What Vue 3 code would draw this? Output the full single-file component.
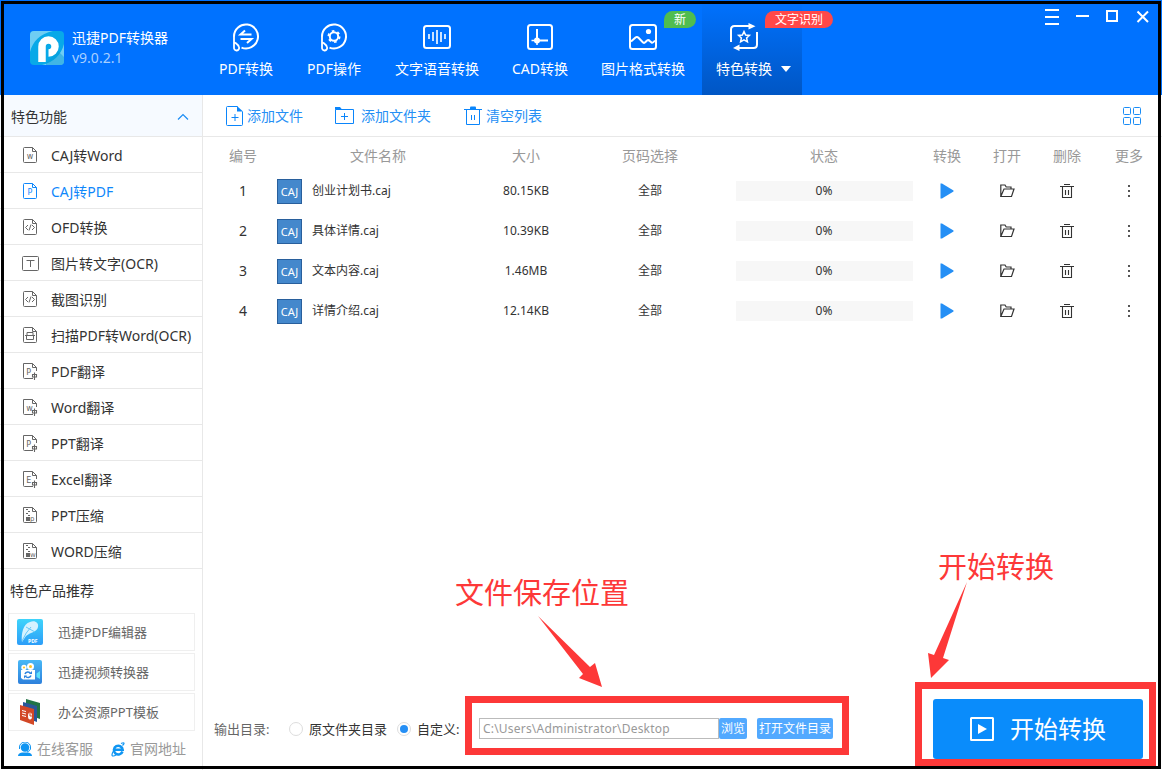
<script setup>
import { ref } from 'vue'

const tabs = [
  { id: 'pdf', label: 'PDF转换' },
  { id: 'ops', label: 'PDF操作' },
  { id: 'voice', label: '文字语音转换', wide: true },
  { id: 'cad', label: 'CAD转换' },
  { id: 'image', label: '图片格式转换', wide: true, badge: '新' },
  { id: 'special', label: '特色转换', badge: '文字识别' },
]

const features = [
  { label: 'CAJ转Word', icon: 'doc', mark: 'w' },
  { label: 'CAJ转PDF', icon: 'doc', mark: 'P' },
  { label: 'OFD转换', icon: 'code' },
  { label: '图片转文字(OCR)', icon: 'ocr' },
  { label: '截图识别', icon: 'code' },
  { label: '扫描PDF转Word(OCR)', icon: 'scan' },
  { label: 'PDF翻译', icon: 'trans', mark: 'P' },
  { label: 'Word翻译', icon: 'trans', mark: 'w' },
  { label: 'PPT翻译', icon: 'trans', mark: 'P' },
  { label: 'Excel翻译', icon: 'trans', mark: 'E' },
  { label: 'PPT压缩', icon: 'zip', mark: 'p' },
  { label: 'WORD压缩', icon: 'zip', mark: 'w' },
]

const products = [
  { id: 'editor', label: '迅捷PDF编辑器' },
  { id: 'video', label: '迅捷视频转换器' },
  { id: 'ppt', label: '办公资源PPT模板' },
]

const files = ref([
  { name: '创业计划书.caj', size: '80.15KB', progress: 0 },
  { name: '具体详情.caj', size: '10.39KB', progress: 0 },
  { name: '文本内容.caj', size: '1.46MB', progress: 0 },
  { name: '详情介绍.caj', size: '12.14KB', progress: 0 },
])

const activeTab = ref('special')
const activeFeature = ref('CAJ转PDF')
const target = ref('custom')
const path = 'C:\\Users\\Administrator\\Desktop'
</script>

<template>
  <div class="window">
    <header class="header">
      <div class="brand">
        <svg class="brand-logo" width="34" height="34" viewBox="0 0 34 34">
          <defs>
            <clipPath id="logo-clip"><rect width="34" height="34" rx="4" /></clipPath>
          </defs>
          <g clip-path="url(#logo-clip)">
            <rect width="34" height="34" fill="#08a9e8" />
            <path d="M0 0H23C10 3 3 10 0 21Z" fill="#6fcdf3" />
            <path d="M34 13V34H12C24 31 31 24 34 13Z" fill="#6fcdf3" />
            <path d="M16 32L28 20 34 26V34H16Z" fill="#0799d5" opacity=".45" />
            <path d="M12 31V15.500A6.500 6.500 0 1 1 18.500 22" fill="none" stroke="#fff" stroke-width="7.500" />
          </g>
        </svg>
        <div class="brand-text">
          <span>迅捷PDF转换器</span>
          <span class="version">v9.0.2.1</span>
        </div>
      </div>

      <nav class="tabs">
        <div
          v-for="tab in tabs"
          :key="tab.id"
          class="tab"
          :class="{ 'tab--wide': tab.wide, 'tab--active': tab.id === activeTab }"
          @click="activeTab = tab.id"
        >
          <svg class="tab-icon" width="30" height="30" viewBox="0 0 30 30" fill="none" stroke="#fff" stroke-width="2">
            <g v-if="tab.id === 'pdf' || tab.id === 'ops'">
              <path d="M3 14.500A12 12 0 1 1 10.500 25.600" />
              <path d="M3 14V25.500A2.600 2.600 0 1 0 8 25C7.500 22.500 5.500 22 4 20.500" stroke-width="1.800" />
              <g v-if="tab.id === 'pdf'">
                <path d="M20.500 12.500H9.500L14 8.500M9.500 17H20.500L16 21" />
              </g>
              <g v-else>
                <circle cx="15" cy="14.500" r="4.200" />
                <circle cx="15" cy="14.500" r="5.600" stroke-width="1.800" stroke-dasharray="2.600 3.264" />
              </g>
            </g>
            <g v-else-if="tab.id === 'voice'">
              <rect x="2" y="4" width="26" height="22" rx="2.500" />
              <path d="M7 12V17M11 10V19M15 8V22M19 10V20M23 12V17" stroke-width="1.600" />
            </g>
            <g v-else-if="tab.id === 'cad'">
              <rect x="3" y="3" width="24" height="24" rx="2.500" />
              <path d="M12 7V18M12 18.500H23" />
              <circle cx="12" cy="18.500" r="3" fill="#fff" stroke="none" />
              <path d="M6.500 18.500H12V23" stroke-width="1.500" />
            </g>
            <g v-else-if="tab.id === 'image'">
              <rect x="2" y="3" width="26" height="24" rx="2.500" />
              <circle cx="20.500" cy="9.500" r="2.600" fill="#fff" stroke="none" />
              <path d="M3 19.500L7.500 15.500Q9 14.300 10.500 15.700L15 20.500Q16.500 21.500 17.500 20L19 18.500Q20.500 17.500 22 19.200L24 20.800Q25 21 27 18.500" />
            </g>
            <g v-else>
              <path d="M2 20V7.500Q2 4 5.500 4H21M28 10V22.500Q28 26 24.500 26H9" />
              <path d="M19.500 1L26.500 4.200 19.500 7.500ZM10.500 22.500L4 26 10.500 29Z" fill="#fff" stroke="none" />
              <path d="M15 9.500L16.600 13 20.400 13.400 17.600 16 18.400 19.800 15 17.900 11.600 19.800 12.400 16 9.600 13.400 13.400 13Z" stroke-width="1.500" />
            </g>
          </svg>
          <span class="tab-label">{{ tab.label }}<i v-if="tab.id === 'special'" class="caret" /></span>
          <span v-if="tab.badge" class="badge" :class="`badge--${tab.id}`">{{ tab.badge }}</span>
        </div>
      </nav>

      <svg class="window-controls" width="106" height="20" viewBox="0 0 106 20" fill="none" stroke="#fff" stroke-width="2">
        <path d="M2 3H16M2 10H16M2 17H16" />
        <path d="M33 9H46" />
        <rect x="64" y="4" width="10" height="10" />
        <path d="M94.500 4.500L105 15M105 4.500L94.500 15" />
      </svg>
    </header>

    <div class="body">
      <aside class="sidebar">
        <div class="group-head">
          <span>特色功能</span>
          <svg width="12" height="8" viewBox="0 0 12 8" fill="none" stroke="#1a8cf5" stroke-width="1.200">
            <path d="M1 6.500L6 1.500 11 6.500" />
          </svg>
        </div>
        <ul class="features">
          <li
            v-for="item in features"
            :key="item.label"
            class="feature"
            :class="{ 'feature--active': item.label === activeFeature }"
            @click="activeFeature = item.label"
          >
            <svg class="feature-icon" width="18" height="18" viewBox="0 0 18 18" fill="none" stroke="currentColor">
              <g v-if="item.icon === 'ocr'">
                <rect x=".5" y="2.500" width="16" height="14" rx="1" />
                <path d="M4.500 6.500H12.500M8.500 6.500V13" />
              </g>
              <g v-else-if="item.icon === 'trans'">
                <path d="M11 16.500H2.500Q1.500 16.500 1.500 15.500V1.500H10.500L14.500 5.500V9M10.500 1.500V5.500H14.500" />
                <path d="M10.500 12.500H14.500V15H10.500ZM12.500 10.500V18" stroke-width="1.100" />
                <text x="4.300" y="13" class="icon-mark">{{ item.mark }}</text>
              </g>
              <g v-else-if="item.icon === 'zip'">
                <path d="M10.500 1.500H1.500V15.500Q1.500 16.500 2.500 16.500H13.500Q14.500 16.500 14.500 15.500V5.500L10.500 1.500V5.500H14.500" />
                <path d="M4 3.500H6M6 5.500H8M4 7.500H6M6 9.500H8" stroke-width="1.200" />
                <rect x="4" y="11" width="4" height="4" fill="currentColor" stroke="none" />
                <text x="8" y="15" class="icon-mark icon-mark--small">{{ item.mark }}</text>
              </g>
              <g v-else>
                <path d="M10.500 1.500H2.500Q1.500 1.500 1.500 2.500V15.500Q1.500 16.500 2.500 16.500H13.500Q14.500 16.500 14.500 15.500V5.500L10.500 1.500V5.500H14.500" />
                <path v-if="item.icon === 'code'" d="M6 7L3.500 9.500 6 12M10 7L12.500 9.500 10 12M9 6.500L7 12.500" />
                <path v-else-if="item.icon === 'scan'" d="M5 6.500H11V9.500M5 6.500V9.500M3 9.500H13M4.500 10V13.500H11.500V10" />
                <text v-else x="8" y="13" text-anchor="middle" class="icon-mark">{{ item.mark }}</text>
              </g>
            </svg>
            <span>{{ item.label }}</span>
          </li>
        </ul>

        <h3 class="products-title">特色产品推荐</h3>
        <div class="products">
          <div v-for="item in products" :key="item.id" class="product">
            <svg v-if="item.id === 'editor'" width="26" height="26" viewBox="0 0 26 26">
              <defs>
                <linearGradient id="editor-bg" x2="0" y2="1">
                  <stop stop-color="#3fd4fb" /><stop offset="1" stop-color="#2c9df8" />
                </linearGradient>
              </defs>
              <rect width="26" height="26" rx="2" fill="url(#editor-bg)" />
              <path d="M5 23C4 15 6 5 13 3C18 1 22 4 21 8C20 13 14 13 9 17Z" fill="#d5f2ff" />
              <path d="M5 22Q9 13 14 8M9 8L18 13" stroke="#66c8f8" fill="none" />
              <text x="11" y="24" class="editor-mark">PDF</text>
            </svg>
            <svg v-else-if="item.id === 'video'" width="26" height="26" viewBox="0 0 26 26">
              <defs>
                <linearGradient id="video-bg" x2="0" y2="1">
                  <stop stop-color="#48b8f6" /><stop offset="1" stop-color="#2d80dc" />
                </linearGradient>
              </defs>
              <rect x="1" y="1" width="24" height="24" rx="2" fill="url(#video-bg)" />
              <circle cx="7" cy="8.500" r="2.700" fill="#fff" />
              <circle cx="13.500" cy="7.500" r="3.500" fill="#fff" />
              <circle cx="7" cy="8.500" r="1.100" fill="#ffc324" />
              <circle cx="13.500" cy="7.500" r="1.500" fill="#ffc324" />
              <path d="M4 11H18V20.500H6L4 19Z" fill="#fff" />
              <path d="M19.500 14.500L23 12V20L19.500 18Z" fill="#5ce0fb" />
              <path d="M8 15A3 3 0 0 1 13.500 14.500M14 16.500A3 3 0 0 1 8.500 17" fill="none" stroke="#2d83de" stroke-width="1.500" />
              <path d="M12 15H15V12ZM10 16.500H7V19.500Z" fill="#2d83de" />
            </svg>
            <svg v-else width="26" height="26" viewBox="0 0 26 26">
              <path d="M9 0L23 4V20L9 15Z" fill="#217346" />
              <path d="M6 3L20 7V23L6 18Z" fill="#2a5699" />
              <path d="M3 6L17 10V26L3 21Z" fill="#d24726" />
              <path d="M5 11.500L9 12.500M5 14L9 15M5 16.500L9 17.500" stroke="#fff" fill="none" />
              <ellipse cx="13" cy="17" rx="2" ry="3.600" fill="#fff" />
              <path d="M13 13V17H15" stroke="#d24726" fill="none" />
            </svg>
            <span>{{ item.label }}</span>
          </div>
        </div>
        <div class="links">
          <span class="link">
            <svg width="14" height="15" viewBox="0 0 14 15" fill="#0f95f2">
              <circle cx="7" cy="5.500" r="4.300" />
              <path d="M1.500 7V5A5.500 5 0 0 1 12.500 5V7Q12 9 9 10" fill="none" stroke="#0f95f2" />
              <path d="M0 14Q0 11 4 10.500H10Q14 11 14 14Z" />
            </svg>
            在线客服
          </span>
          <span class="link">
            <svg width="14" height="15" viewBox="0 0 14 15" fill="none" stroke="#0f95f2">
              <path d="M11.500 9.500A4.400 4.400 0 1 1 11.700 7.800H4" stroke-width="2.500" />
              <path d="M11.500 3.500C14 1 13.500 0 10 1.500M2.500 9C0 13 .5 15.500 5 13" stroke-width="1.200" />
            </svg>
            官网地址
          </span>
        </div>
      </aside>

      <main class="main">
        <div class="toolbar">
          <button class="tool tool--file">
            <svg width="18" height="20" viewBox="0 0 18 20" fill="none" stroke="#0a85fb">
              <path d="M11.500 .5H1.500Q.5 .5 .5 1.500V18.500Q.5 19.500 1.500 19.500H15.500Q16.500 19.500 16.500 18.500V5.500M5.500 11.500H12.500M9 8V15" />
              <path d="M11 0L17 5.500H11Z" fill="#0a85fb" stroke="none" />
            </svg>
            添加文件
          </button>
          <button class="tool tool--folder">
            <svg width="19" height="20" viewBox="0 0 19 20" fill="none" stroke="#0a85fb">
              <path d="M.5 3.500H18.500V17.500H.5ZM6 10.500H13M9.500 7V14" />
              <path d="M0 1H5L7 3.500H0Z" fill="#0a85fb" stroke="none" />
            </svg>
            添加文件夹
          </button>
          <button class="tool tool--clear">
            <svg width="18" height="20" viewBox="0 0 18 20" fill="none" stroke="#0a85fb">
              <path d="M0 3.500H18M2.500 4V18.500H15.500V4M7.500 9V14M10.500 9V14" />
              <path d="M6 3V1.500Q6 .5 7 .5H11Q12 .5 12 1.500V3Z" fill="#0a85fb" stroke="none" />
            </svg>
            清空列表
          </button>
          <svg class="grid-toggle" width="18" height="18" viewBox="0 0 18 18" fill="none" stroke="#1a8cf5">
            <rect x=".5" y=".5" width="7" height="7" rx="1" />
            <rect x="10.500" y=".5" width="7" height="7" rx="1" />
            <rect x=".5" y="10.500" width="7" height="7" rx="1" />
            <rect x="10.500" y="10.500" width="7" height="7" rx="1" />
          </svg>
        </div>

        <div class="row row--head">
          <span>编号</span>
          <span class="head-name">文件名称</span>
          <span>大小</span>
          <span>页码选择</span>
          <span>状态</span>
          <span>转换</span>
          <span>打开</span>
          <span>删除</span>
          <span>更多</span>
        </div>
        <div v-for="(file, i) in files" :key="file.name" class="row">
          <span class="index">{{ i + 1 }}</span>
          <span class="file">
            <i class="file-type">CAJ</i>
            {{ file.name }}
          </span>
          <span>{{ file.size }}</span>
          <span>全部</span>
          <span class="progress">{{ file.progress }}%</span>
          <span>
            <svg width="14" height="16" viewBox="0 0 14 16" fill="#258ff5">
              <path d="M.5 .5H2L13.500 7.500V8.500L2 15.500H.5Z" />
            </svg>
          </span>
          <span>
            <svg width="15" height="14" viewBox="0 0 15 14" fill="none" stroke="#333" stroke-width="1.200">
              <path d="M.8 12.500V1H5L6.200 3H11V5M.8 12.500L4 5H14L11.500 12.500Z" />
            </svg>
          </span>
          <span>
            <svg width="14" height="16" viewBox="0 0 14 16" fill="none" stroke="#333" stroke-width="1.100">
              <path d="M4 1.500H10M0 3.500H14M2.500 4V14.500H11.500V4M5.500 7V12M8.500 7V12" />
            </svg>
          </span>
          <span>
            <svg width="2" height="14" viewBox="0 0 2 14" fill="#555">
              <path d="M0 1H2V3H0ZM0 6H2V8H0ZM0 11H2V13H0Z" />
            </svg>
          </span>
        </div>

        <footer class="output">
          <span class="output-label">输出目录:</span>
          <label class="choice" @click="target = 'source'">
            <i class="radio" :class="{ 'radio--on': target === 'source' }" />原文件夹目录
          </label>
          <label class="choice choice--custom" @click="target = 'custom'">
            <i class="radio" :class="{ 'radio--on': target === 'custom' }" />自定义:
          </label>
          <div class="path">{{ path }}</div>
          <button class="small-btn">浏览</button>
          <button class="small-btn small-btn--open">打开文件目录</button>
          <button class="start">
            <svg width="24" height="24" viewBox="0 0 24 24" fill="none" stroke="#fff" stroke-width="2">
              <rect x="1" y="1" width="22" height="22" rx=".5" />
              <path d="M8 7L17 12 8 17Z" fill="#fff" stroke="none" />
            </svg>
            开始转换
          </button>
        </footer>
      </main>
    </div>

    <!-- tutorial marks over the window -->
    <div class="mark mark--path" />
    <div class="mark mark--start" />
    <span class="note note--path">文件保存位置</span>
    <span class="note note--start">开始转换</span>
    <svg class="arrows" width="1162" height="770" viewBox="0 0 1162 770" fill="#fd3838">
      <path d="M538 616L590 667 595 663 602 687 579 678 583 674Z" />
      <path d="M967 582L943 658 949 660 931 678 928 653 934 655Z" />
    </svg>
    <div class="frame" />
  </div>
</template>

<style>
body {
  margin: 0;
  overflow: hidden;
}
</style>

<style scoped>
.window {
  position: relative;
  display: flex;
  flex-direction: column;
  width: 1162px;
  height: 770px;
  overflow: hidden;
  background: #fff;
  color: #333;
  font-family: "Noto Sans", "Noto Sans CJK SC", sans-serif;
  font-size: 14px;
  line-height: 20px;
  white-space: nowrap;
}

.window svg {
  display: block;
  flex: none;
}

.window i {
  font-style: normal;
}

button {
  padding: 0;
  border: 0;
  background: none;
  font: inherit;
  color: inherit;
}

.header {
  display: flex;
  flex: none;
  height: 95px;
  background: #0072ff;
  color: #fff;
}

.brand {
  display: flex;
  gap: 8px;
  width: 172px;
  padding: 28px 0 0 30px;
}

.brand-logo {
  margin-top: 3px;
}

.brand-text {
  display: flex;
  flex-direction: column;
}

.version {
  color: #a8cfff;
}

.tabs {
  display: flex;
}

.tab {
  position: relative;
  display: flex;
  flex-direction: column;
  align-items: center;
  width: 88px;
  padding-top: 22px;
  box-sizing: border-box;
}

.tab--wide {
  width: 118px;
}

.tab--active {
  align-items: flex-start;
  width: 100px;
  padding-left: 14px;
  background: linear-gradient(#0072ff, #0056c4);
}

.tab--active .tab-icon {
  margin-left: 13px;
}

.tab-label {
  display: flex;
  align-items: center;
  margin-top: 7px;
}

.caret {
  margin-left: 9px;
  border: 5px solid transparent;
  border-top: 6px solid #fff;
  border-bottom: 0;
}

.badge {
  position: absolute;
  top: 11px;
  height: 17px;
  border-radius: 9px 9px 9px 0;
  font-size: 12px;
  line-height: 17px;
  text-align: center;
}

.badge--image {
  left: 80px;
  width: 32px;
  background: #50bd4f;
}

.badge--special {
  left: 63px;
  width: 68px;
  background: #ff4848;
}

.window-controls {
  margin: 7px 13px 0 auto;
}

.body {
  display: flex;
  flex: 1;
}

.sidebar {
  width: 202px;
  border-right: 1px solid #e8e8e8;
}

.group-head {
  display: flex;
  align-items: center;
  justify-content: space-between;
  height: 41px;
  padding: 2px 13px 0 11px;
  box-sizing: border-box;
  background: #f6faff;
  border-bottom: 1px solid #e8e8e8;
  box-sizing: content-box;
  height: 39px;
}

.features {
  margin: 0;
  padding: 0;
  list-style: none;
}

.feature {
  display: flex;
  align-items: center;
  gap: 11px;
  height: 35px;
  padding-left: 22px;
  border-bottom: 1px solid #e8e8e8;
}

.feature span {
  padding-top: 2px;
}

.feature-icon {
  color: #666;
}

.feature--active,
.feature--active .feature-icon {
  color: #0f87fb;
}

.icon-mark {
  font: 8px "DejaVu Sans", sans-serif;
  fill: currentColor;
  stroke: none;
}

.icon-mark--small {
  font-size: 7px;
}

.products-title {
  margin: 12px 0 12px 10px;
  font-size: 14px;
  font-weight: 400;
}

.products {
  display: flex;
  flex-direction: column;
  gap: 2px;
  margin: 0 7px 0 8px;
}

.product {
  display: flex;
  align-items: center;
  gap: 15px;
  height: 36px;
  padding-left: 8px;
  border: 1px solid #efefef;
  color: #666;
  font-size: 13px;
}

.editor-mark {
  font: bold 5px "Open Sans", sans-serif;
  fill: #fff;
}

.links {
  display: flex;
  gap: 18px;
  padding: 8px 0 0 18px;
  color: #999;
}

.link {
  display: flex;
  align-items: center;
  gap: 5px;
}

.main {
  display: flex;
  flex: 1;
  flex-direction: column;
  font-size: 12px;
}

.toolbar {
  display: flex;
  align-items: center;
  height: 41px;
  padding: 1px 21px 0 23px;
  box-sizing: border-box;
  border-bottom: 1px solid #e8e8e8;
  box-sizing: content-box;
  height: 40px;
}

.tool {
  display: flex;
  align-items: center;
  color: #258ff5;
  font-size: 14px;
}

.tool--file {
  gap: 3px;
}

.tool--folder {
  gap: 7px;
  margin-left: 32px;
}

.tool--clear {
  gap: 4px;
  margin-left: 33px;
}

.grid-toggle {
  margin-left: auto;
}

.row {
  display: grid;
  grid-template-columns: 64px 209px 84px 164px 184px 62px 58px 62px 62px;
  align-items: center;
  justify-items: center;
  height: 40px;
  padding-left: 8px;
}

.row--head {
  height: 30px;
  padding-top: 4px;
  color: #999;
  font-size: 14px;
}

.head-name {
  margin-right: 3px;
}

.index {
  font-size: 14px;
}

.file {
  display: flex;
  align-items: center;
  justify-self: start;
  gap: 10px;
  padding-left: 2px;
}

.file-type {
  width: 23px;
  height: 23px;
  border: 1px solid #285f9c;
  background: #4488cc;
  color: #fff;
  font-size: 11px;
  line-height: 24px;
  text-align: center;
}

.progress {
  width: 177px;
  background: #f7f7f7;
  text-align: center;
}

.output {
  display: flex;
  align-items: center;
  height: 81px;
  margin-top: auto;
  padding: 0 19px 1px 11px;
  box-sizing: border-box;
  font-size: 13px;
}

.output-label {
  width: 75px;
  color: #666;
}

.choice {
  display: flex;
  align-items: center;
  gap: 6px;
}

.choice--custom {
  margin-left: 10px;
}

.radio {
  display: grid;
  place-items: center;
  width: 12px;
  height: 12px;
  border: 1px solid #ddd;
  border-radius: 50%;
}

.radio--on::after {
  width: 8px;
  height: 8px;
  border-radius: 50%;
  background: #258ff5;
  content: "";
}

.path {
  width: 240px;
  height: 21px;
  margin: 0 0 1px auto;
  padding-left: 3px;
  box-sizing: border-box;
  border: 1px solid #bbb;
  color: #999;
  font-size: 12px;
  letter-spacing: 0.2px;
  line-height: 19px;
}

.small-btn {
  width: 28px;
  height: 21px;
  margin-bottom: 1px;
  border-radius: 2px;
  background: #52a9ff;
  color: #fff;
  font-size: 12px;
}

.small-btn--open {
  width: 76px;
  margin-left: 10px;
}

.start {
  display: flex;
  align-items: center;
  justify-content: center;
  gap: 16px;
  width: 210px;
  height: 60px;
  margin-left: 100px;
  border-radius: 3px;
  background: #0a8cfb;
  color: #fff;
  font-size: 24px;
}

.mark {
  position: absolute;
  box-sizing: border-box;
  border: 7px solid #fd3838;
}

.mark--path {
  top: 696px;
  left: 465px;
  width: 384px;
  height: 59px;
}

.mark--start {
  top: 682px;
  left: 915px;
  width: 241px;
  height: 84px;
}

.note {
  position: absolute;
  color: #fd3838;
  font-size: 29px;
  line-height: 36px;
}

.note--path {
  top: 575px;
  left: 455px;
}

.note--start {
  top: 549px;
  left: 938px;
}

.arrows {
  position: absolute;
  inset: 0;
  pointer-events: none;
}

.frame {
  position: absolute;
  inset: 1px;
  border: 3px solid #000;
  pointer-events: none;
}
</style>
